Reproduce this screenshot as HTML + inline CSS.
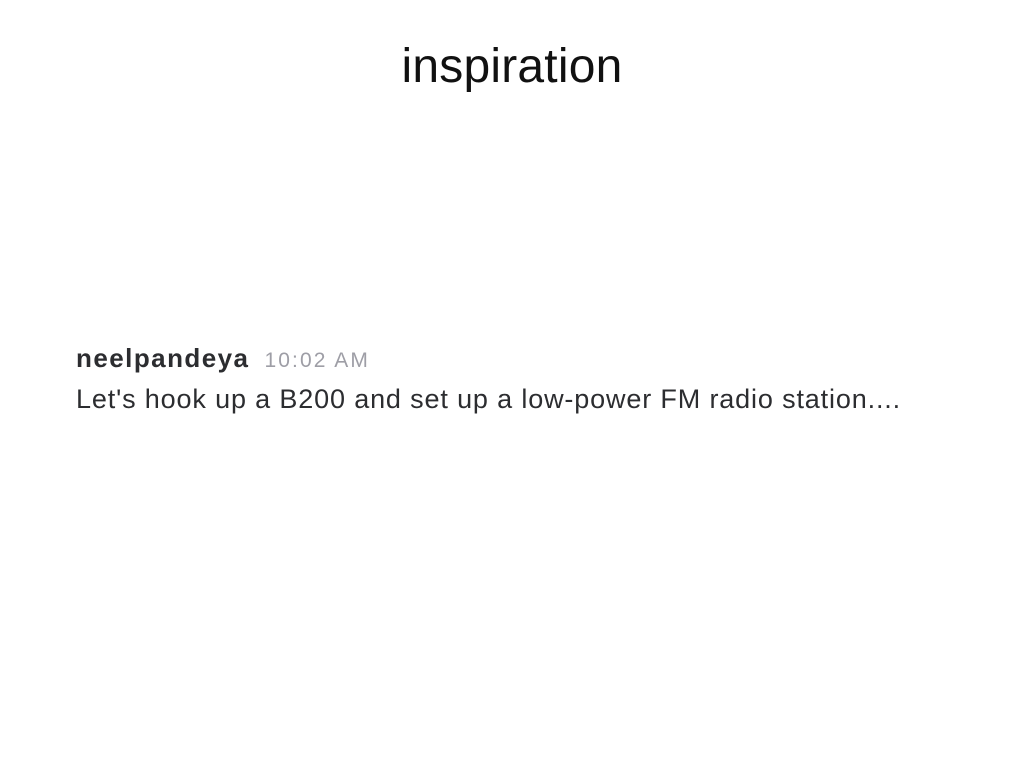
<!DOCTYPE html>
<html><head><style>
body{margin:0;width:1024px;height:768px;background:#fff;position:relative;font-family:"Liberation Sans",sans-serif;}
.t{position:absolute;top:39px;left:0;width:1024px;text-align:center;font-size:48px;color:#111;font-weight:normal;letter-spacing:0.2px;}
.n{position:absolute;left:76px;top:343px;font-size:26px;font-weight:bold;color:#2c2d30;letter-spacing:1.45px;}
.n span{font-size:21px;font-weight:normal;color:#9e9ea6;margin-left:15px;letter-spacing:2.1px;}
.m{position:absolute;left:76px;top:384px;font-size:27px;color:#2c2d30;letter-spacing:0.85px;}
</style></head><body>
<div class="t">inspiration</div>
<div class="n">neelpandeya<span>10:02 AM</span></div>
<div class="m">Let's hook up a B200 and set up a low-power FM radio station....</div>
</body></html>
